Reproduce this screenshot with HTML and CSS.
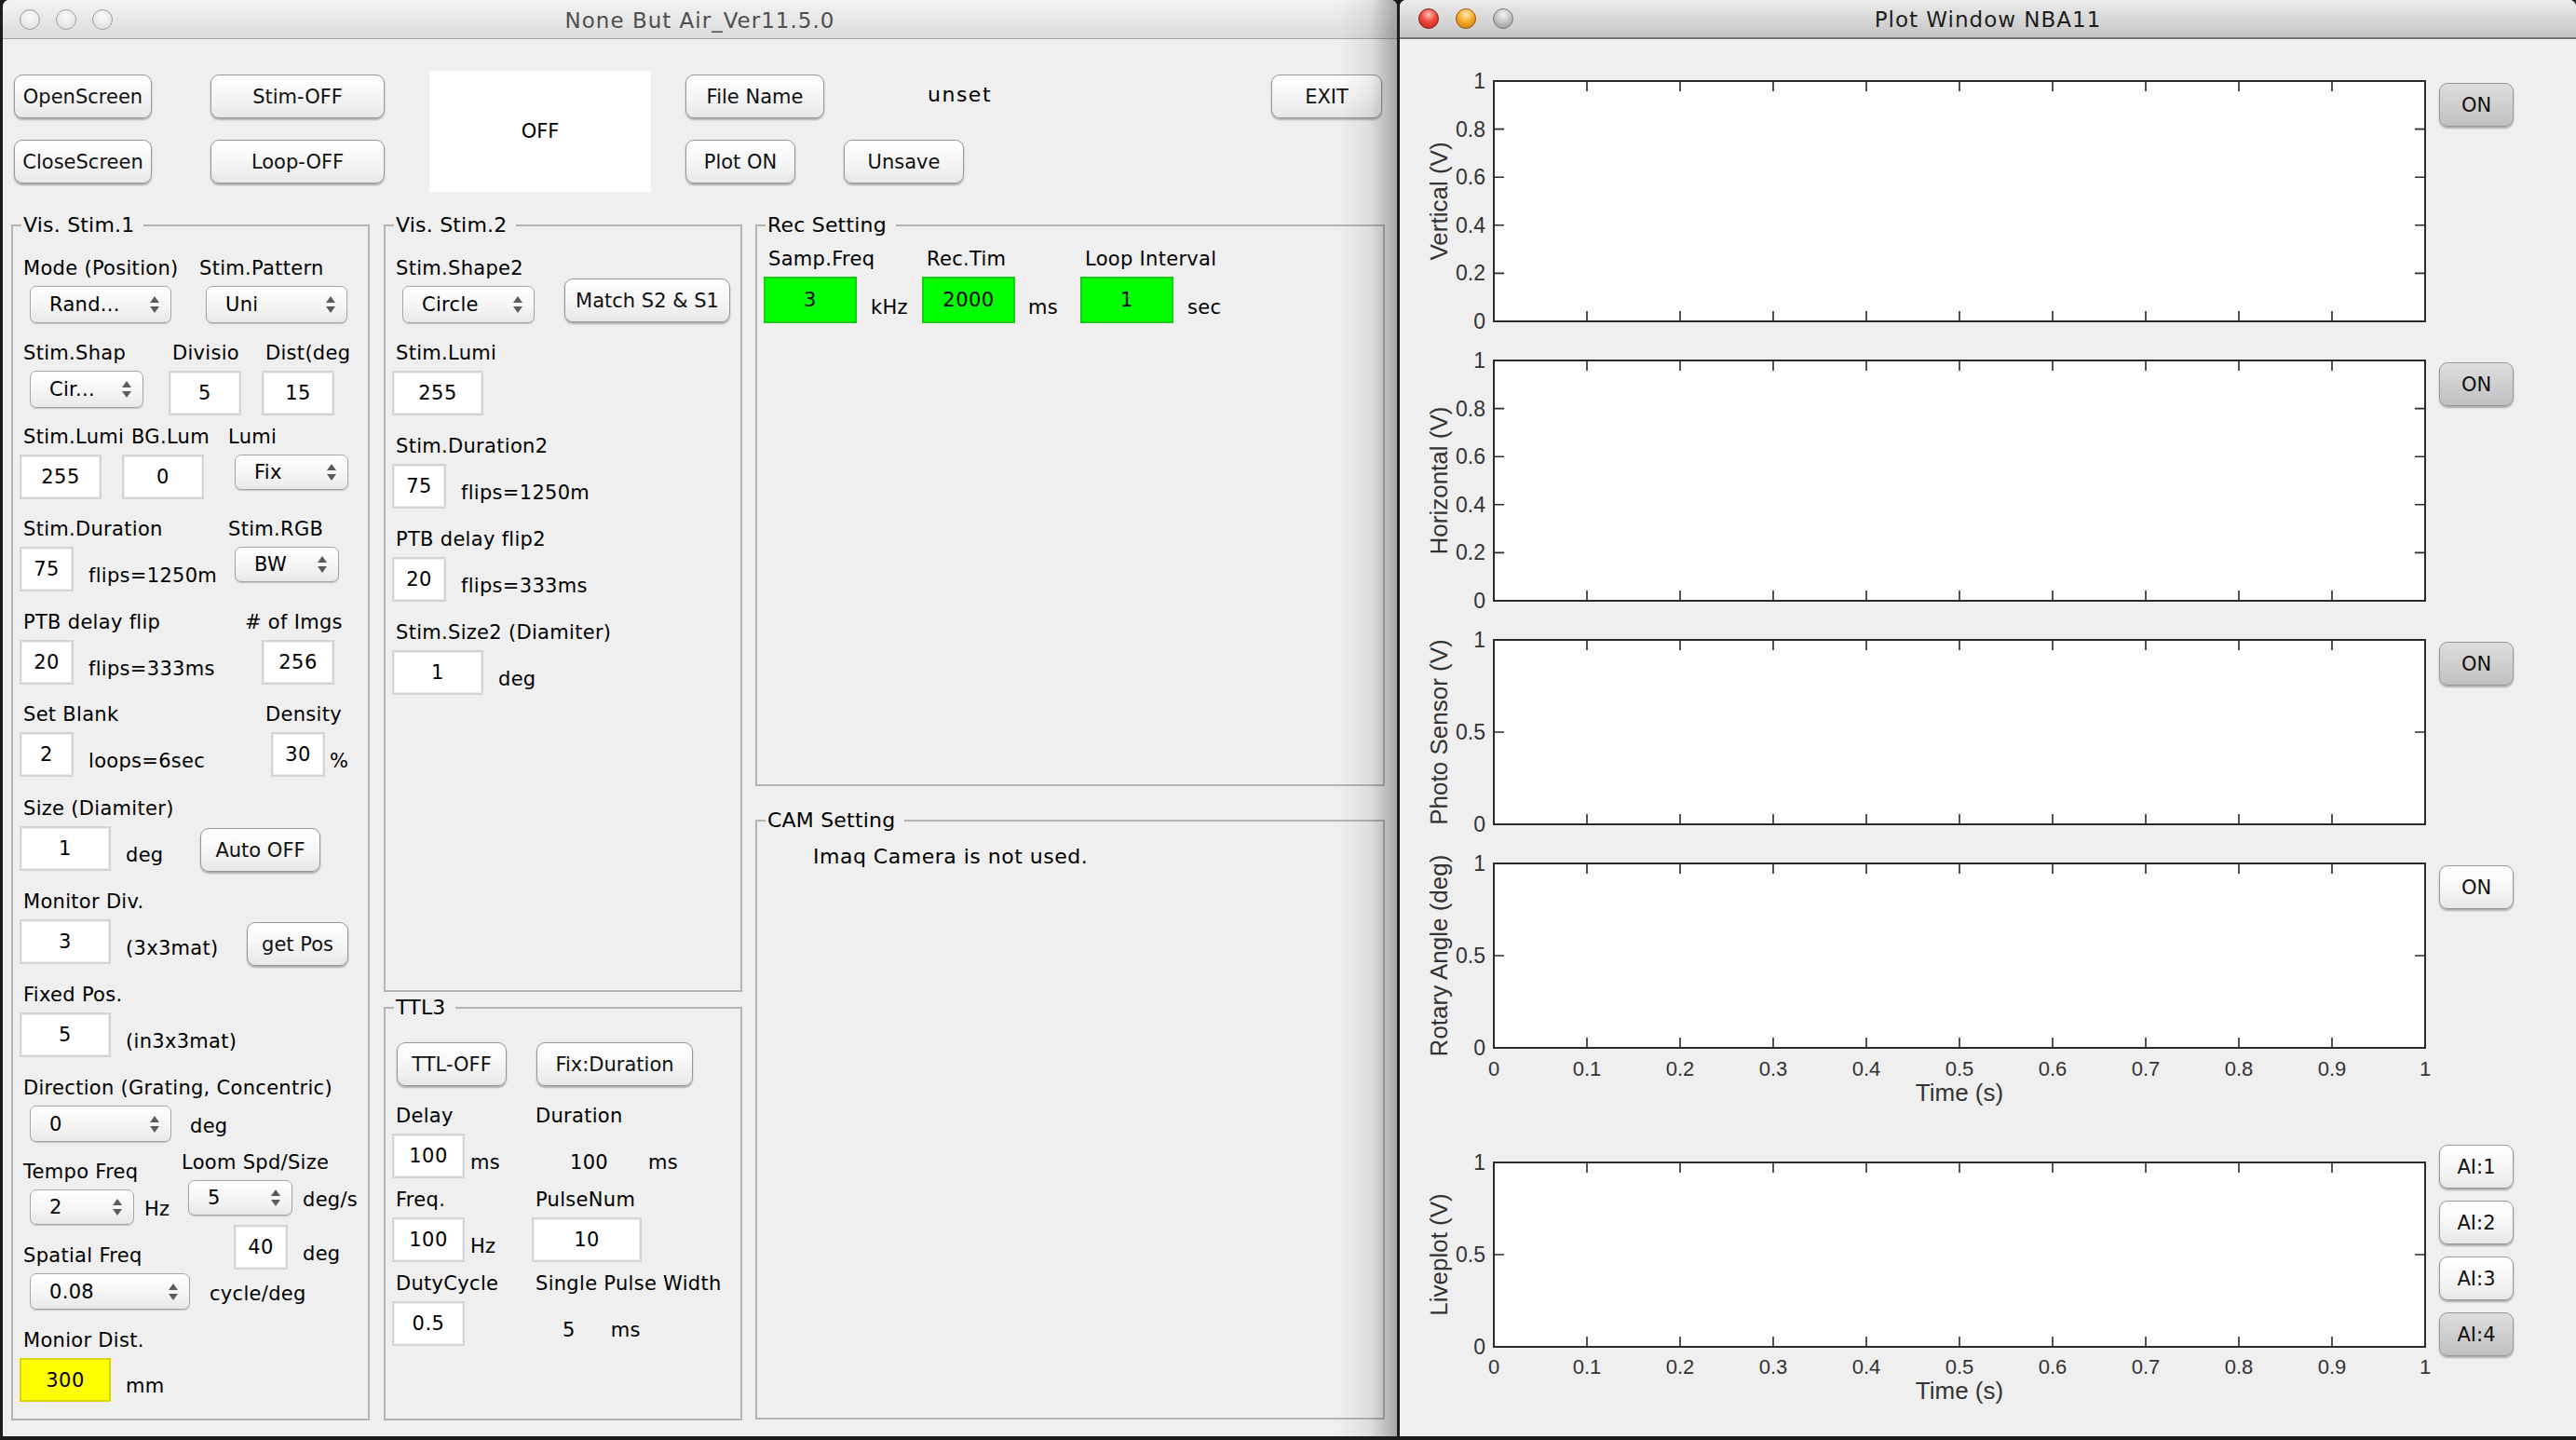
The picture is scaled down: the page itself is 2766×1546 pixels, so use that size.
FILE: index.html
```html
<!DOCTYPE html>
<html lang="en">
<head>
<meta charset="utf-8">
<title>None But Air_Ver11.5.0</title>
<link rel="stylesheet" href="styles.css">
</head>
<body>
<div class="win win-main">
  <div class="titlebar inactive">
    <div class="lights"><span class="light"></span><span class="light"></span><span class="light"></span></div>
    <div class="title">None But Air_Ver11.5.0</div>
    <div></div>
  </div>
  <div class="topbar">
    <div class="stack">
      <div class="btn b-screen">OpenScreen</div>
      <div class="btn b-screen">CloseScreen</div>
    </div>
    <div class="stack stim">
      <div class="btn b-stim">Stim-OFF</div>
      <div class="btn b-stim">Loop-OFF</div>
    </div>
    <div class="status">OFF</div>
    <div class="stack files">
      <div class="file-row"><div class="btn b-file">File Name</div><span class="fname">unset</span></div>
      <div class="file-row"><div class="btn b-plot">Plot ON</div><div class="btn b-unsave">Unsave</div></div>
    </div>
    <div class="btn b-exit">EXIT</div>
  </div>
  <div class="panels">
    <fieldset class="grp vs1">
      <legend>Vis. Stim.1</legend>
      <div class="body b-vs1">
        <div class="row c-mode">
          <div class="fld"><div class="lbl">Mode (Position)</div><div class="line"><div class="popup w152">Rand...</div></div></div>
          <div class="fld"><div class="lbl">Stim.Pattern</div><div class="line"><div class="popup w152">Uni</div></div></div>
        </div>
        <div class="row c-shape">
          <div class="fld"><div class="lbl">Stim.Shap</div><div class="line"><div class="popup w122">Cir...</div></div></div>
          <div class="fld"><div class="lbl">Divisio</div><div class="line"><div class="edit w78">5</div></div></div>
          <div class="fld"><div class="lbl">Dist(deg</div><div class="line"><div class="edit w78">15</div></div></div>
        </div>
        <div class="row c-lumi">
          <div class="fld"><div class="lbl">Stim.Lumi</div><div class="line"><div class="edit w88">255</div></div></div>
          <div class="fld bg"><div class="lbl">BG.Lum</div><div class="line"><div class="edit w88">0</div></div></div>
          <div class="fld"><div class="lbl">Lumi</div><div class="line"><div class="popup s w122">Fix</div></div></div>
        </div>
        <div class="row c-dur">
          <div class="fld"><div class="lbl">Stim.Duration</div><div class="line"><div class="edit w58">75</div><span class="unit">flips=1250m</span></div></div>
          <div class="fld"><div class="lbl">Stim.RGB</div><div class="line"><div class="popup s w112">BW</div></div></div>
        </div>
        <div class="row c-ptb">
          <div class="fld"><div class="lbl">PTB delay flip</div><div class="line"><div class="edit w58">20</div><span class="unit">flips=333ms</span></div></div>
          <div class="fld"><div class="lbl"># of Imgs</div><div class="line"><div class="edit w78 imgs">256</div></div></div>
        </div>
        <div class="row c-blank">
          <div class="fld"><div class="lbl">Set Blank</div><div class="line"><div class="edit w58">2</div><span class="unit">loops=6sec</span></div></div>
          <div class="fld"><div class="lbl">Density</div><div class="line"><div class="edit w58 dens">30</div><span class="unit pct">%</span></div></div>
        </div>
        <div class="row c-size">
          <div class="fld"><div class="lbl">Size (Diamiter)</div><div class="line"><div class="edit w98">1</div><span class="unit">deg</span></div></div>
          <div class="btn w129 auto">Auto OFF</div>
        </div>
        <div class="row c-mdiv">
          <div class="fld"><div class="lbl">Monitor Div.</div><div class="line"><div class="edit w98">3</div><span class="unit">(3x3mat)</span></div></div>
          <div class="btn w109 getpos">get Pos</div>
        </div>
        <div class="row">
          <div class="fld"><div class="lbl">Fixed Pos.</div><div class="line"><div class="edit w98">5</div><span class="unit">(in3x3mat)</span></div></div>
        </div>
        <div class="row">
          <div class="fld"><div class="lbl">Direction (Grating, Concentric)</div><div class="line"><div class="popup m w152">0</div><span class="unit far">deg</span></div></div>
        </div>
        <div class="row c-tempo">
          <div class="fld"><div class="lbl">Tempo Freq</div><div class="line"><div class="popup s w112">2</div><span class="unit near">Hz</span></div></div>
          <div class="fld loom"><div class="lbl">Loom Spd/Size</div>
            <div class="line"><div class="popup s w112">5</div><span class="unit near">deg/s</span></div>
            <div class="line l40"><div class="edit w58">40</div><span class="unit">deg</span></div>
          </div>
        </div>
        <div class="row">
          <div class="fld"><div class="lbl">Spatial Freq</div><div class="line"><div class="popup m w172">0.08</div><span class="unit far2">cycle/deg</span></div></div>
        </div>
        <div class="row">
          <div class="fld"><div class="lbl">Monior Dist.</div><div class="line"><div class="edit w98 yellow">300</div><span class="unit">mm</span></div></div>
        </div>
      </div>
    </fieldset>

    <div class="pcol mid">
      <fieldset class="grp vs2">
        <legend>Vis. Stim.2</legend>
        <div class="body b-vs2">
          <div class="row c-s2">
            <div class="fld"><div class="lbl">Stim.Shape2</div><div class="line"><div class="popup w142">Circle</div></div></div>
            <div class="btn w178 match">Match S2 &amp; S1</div>
          </div>
          <div class="row"><div class="fld"><div class="lbl">Stim.Lumi</div><div class="line"><div class="edit w98">255</div></div></div></div>
          <div class="row"><div class="fld"><div class="lbl">Stim.Duration2</div><div class="line"><div class="edit w58">75</div><span class="unit">flips=1250m</span></div></div></div>
          <div class="row"><div class="fld"><div class="lbl">PTB delay flip2</div><div class="line"><div class="edit w58">20</div><span class="unit">flips=333ms</span></div></div></div>
          <div class="row"><div class="fld"><div class="lbl">Stim.Size2 (Diamiter)</div><div class="line"><div class="edit w98">1</div><span class="unit">deg</span></div></div></div>
        </div>
      </fieldset>
      <fieldset class="grp ttl">
        <legend>TTL3</legend>
        <div class="body b-ttl">
          <div class="row c-ttl"><div class="btn w118 tb">TTL-OFF</div><div class="btn w168 tb">Fix:Duration</div></div>
          <div class="row c-ttl">
            <div class="fld"><div class="lbl">Delay</div><div class="line"><div class="edit w78">100</div><span class="unit n6">ms</span></div></div>
            <div class="fld"><div class="lbl">Duration</div><div class="line"><span class="unit v1">100</span><span class="unit v2">ms</span></div></div>
          </div>
          <div class="row c-ttl">
            <div class="fld"><div class="lbl">Freq.</div><div class="line"><div class="edit w78">100</div><span class="unit n6">Hz</span></div></div>
            <div class="fld"><div class="lbl">PulseNum</div><div class="line"><div class="edit w118">10</div></div></div>
          </div>
          <div class="row c-ttl">
            <div class="fld"><div class="lbl">DutyCycle</div><div class="line"><div class="edit w78">0.5</div></div></div>
            <div class="fld"><div class="lbl">Single Pulse Width</div><div class="line"><span class="unit v3">5</span><span class="unit v4">ms</span></div></div>
          </div>
        </div>
      </fieldset>
    </div>

    <div class="pcol">
      <fieldset class="grp rec">
        <legend>Rec Setting</legend>
        <div class="body b-rec">
          <div class="row c-rec">
            <div class="fld"><div class="lbl">Samp.Freq</div><div class="line"><div class="edit green">3</div><span class="unit g15">kHz</span></div></div>
            <div class="fld"><div class="lbl">Rec.Tim</div><div class="line"><div class="edit green">2000</div><span class="unit g14">ms</span></div></div>
            <div class="fld"><div class="lbl">Loop Interval</div><div class="line"><div class="edit green">1</div><span class="unit g15">sec</span></div></div>
          </div>
        </div>
      </fieldset>
      <fieldset class="grp cam">
        <legend>CAM Setting</legend>
        <div class="body b-cam"><div class="cam-msg">Imaq Camera is not used.</div></div>
      </fieldset>
    </div>
  </div>
</div>

<div class="win win-plot">
  <div class="titlebar active">
    <div class="lights"><span class="light red"></span><span class="light amber"></span><span class="light grey"></span></div>
    <div class="title">Plot Window NBA11</div>
    <div></div>
  </div>
  <div class="plot-body">
    <svg class="plots" width="1103" height="1500" viewBox="1503 42 1103 1500" xmlns="http://www.w3.org/2000/svg">
      <g id="axA">
        <rect class="box" x="1604" y="87" width="1000" height="258"/>
        <path class="tk" d="M1704 87v11M1804 87v11M1904 87v11M2004 87v11M2104 87v11M2204 87v11M2304 87v11M2404 87v11M2504 87v11M1704 345v-11M1804 345v-11M1904 345v-11M2004 345v-11M2104 345v-11M2204 345v-11M2304 345v-11M2404 345v-11M2504 345v-11M1604 138.6h11M1604 190.2h11M1604 241.8h11M1604 293.4h11M2604 138.6h-11M2604 190.2h-11M2604 241.8h-11M2604 293.4h-11"/>
        <g class="yt">
          <text x="1595" y="87">1</text>
          <text x="1595" y="138.6">0.8</text>
          <text x="1595" y="190.2">0.6</text>
          <text x="1595" y="241.8">0.4</text>
          <text x="1595" y="293.4">0.2</text>
          <text x="1595" y="345">0</text>
        </g>
      </g>
      <use href="#axA" y="300"/>
      <g id="axB">
        <rect class="box" x="1604" y="687" width="1000" height="198"/>
        <path class="tk" d="M1704 687v11M1804 687v11M1904 687v11M2004 687v11M2104 687v11M2204 687v11M2304 687v11M2404 687v11M2504 687v11M1704 885v-11M1804 885v-11M1904 885v-11M2004 885v-11M2104 885v-11M2204 885v-11M2304 885v-11M2404 885v-11M2504 885v-11M1604 786h11M2604 786h-11"/>
        <g class="yt">
          <text x="1595" y="687">1</text>
          <text x="1595" y="786">0.5</text>
          <text x="1595" y="885">0</text>
        </g>
      </g>
      <use href="#axB" y="240"/>
      <use href="#axB" y="561"/>
      <g id="xl" class="xt">
        <text x="1604" y="1147">0</text>
        <text x="1704" y="1147">0.1</text>
        <text x="1804" y="1147">0.2</text>
        <text x="1904" y="1147">0.3</text>
        <text x="2004" y="1147">0.4</text>
        <text x="2104" y="1147">0.5</text>
        <text x="2204" y="1147">0.6</text>
        <text x="2304" y="1147">0.7</text>
        <text x="2404" y="1147">0.8</text>
        <text x="2504" y="1147">0.9</text>
        <text x="2604" y="1147">1</text>
        <text class="lab" x="2104" y="1173">Time (s)</text>
      </g>
      <use href="#xl" y="320"/>
      <text class="lab" transform="translate(1545 216) rotate(-90)">Vertical (V)</text>
      <text class="lab" transform="translate(1545 516) rotate(-90)">Horizontal (V)</text>
      <text class="lab" transform="translate(1545 786) rotate(-90)">Photo Sensor (V)</text>
      <text class="lab" transform="translate(1545 1026) rotate(-90)">Rotary Angle (deg)</text>
      <text class="lab" transform="translate(1545 1347) rotate(-90)">Liveplot (V)</text>
    </svg>
    <div class="plot-btns">
      <div class="btn pb down">ON</div>
      <div class="btn pb down gap-plot">ON</div>
      <div class="btn pb down gap-plot">ON</div>
      <div class="btn pb gap-short">ON</div>
      <div class="btn pb gap-plot">AI:1</div>
      <div class="btn pb gap-ai">AI:2</div>
      <div class="btn pb gap-ai">AI:3</div>
      <div class="btn pb down gap-ai">AI:4</div>
    </div>
  </div>
</div>
</body>
</html>
```

FILE: styles.css
```css
* { box-sizing: border-box; }
html, body { margin: 0; padding: 0; }
body {
  width: 2766px;
  height: 1546px;
  overflow: hidden;
  background: #1c1c1c;
  display: flex;
  align-items: flex-start;
  font-family: "DejaVu Sans", "Liberation Sans", sans-serif;
  color: #000;
}

/* windows */
.win {
  height: 1542px;
  margin-left: 3px;
  background: #efefef;
  border-radius: 7px 7px 0 0;
  position: relative;
  overflow: hidden;
  display: flex;
  flex-direction: column;
}
.win-main { width: 1497px; }
.win-main::after {
  content: "";
  position: absolute;
  top: 0; right: 0; bottom: 0;
  width: 64px;
  background: linear-gradient(90deg, rgba(0,0,0,0), rgba(0,0,0,.07) 55%, rgba(0,0,0,.30));
  pointer-events: none;
}
.win-plot { width: 1263px; }

.titlebar {
  flex: 0 0 42px;
  display: grid;
  grid-template-columns: 1fr auto 1fr;
  align-items: center;
}
.titlebar.inactive { background: linear-gradient(#f3f3f3, #dcdcdc); border-bottom: 1px solid #a6a6a6; }
.titlebar.active { background: linear-gradient(#ececec, #c4c4c4); border-bottom: 2px solid #727272; }
.lights { display: flex; gap: 17px; }
.inactive .lights { padding-left: 18px; }
.active .lights { padding-left: 20px; gap: 18px; }
.light {
  width: 22px; height: 22px; border-radius: 50%;
  background: radial-gradient(circle at 50% 35%, #fbfbfb, #dadada);
  border: 1px solid #a0a0a0;
}
.light.red { background: radial-gradient(circle at 50% 28%, #ffc2b8 0%, #f0483b 45%, #b11f17 100%); border-color: #861a12; }
.light.amber { background: radial-gradient(circle at 50% 28%, #ffe9b0 0%, #f4a928 48%, #c0740f 100%); border-color: #94590b; }
.light.grey { background: radial-gradient(circle at 50% 28%, #f4f4f4 0%, #c2c2c2 50%, #8d8d8d 100%); border-color: #7b7b7b; }
.title { font-size: 23px; letter-spacing: 1px; white-space: nowrap; padding-top: 2px; }
.inactive .title { color: #4f4f4f; }
.active .title { color: #1e1e1e; }

/* buttons / controls */
.btn {
  height: 47px;
  display: flex; align-items: center; justify-content: center;
  border: 1px solid #979797;
  border-radius: 9px;
  background: linear-gradient(#ffffff, #f7f7f7 45%, #e8e8e8);
  box-shadow: 0 2px 2px rgba(0,0,0,.28);
  font-size: 21px;
  color: #111;
  white-space: nowrap;
}
.btn.down { background: linear-gradient(#dedede, #cfcfcf 50%, #c1c1c1); }

.lbl { height: 26px; line-height: 26px; font-size: 21px; white-space: nowrap; letter-spacing: .3px; }
.fld { display: flex; flex-direction: column; align-items: flex-start; }
.fld.bg .lbl { margin-left: 6px; }
.line { display: flex; align-items: flex-end; margin-top: 6px; }
.unit { line-height: 26px; margin: 0 0 4px 16px; font-size: 21px; white-space: nowrap; letter-spacing: .3px; }
.unit.near { margin-left: 11px; }
.unit.far { margin-left: 20px; }
.unit.far2 { margin-left: 21px; }
.unit.pct { margin-left: 5px; }
.unit.n6 { margin-left: 6px; }
.unit.v1 { margin-left: 37px; }
.unit.v2 { margin-left: 43px; }
.unit.v3 { margin-left: 29px; }
.unit.v4 { margin-left: 38px; }
.unit.g15 { margin-left: 15px; }
.unit.g14 { margin-left: 14px; }

.edit {
  height: 48px;
  margin-left: -4px;
  background: #fff;
  border: 2px solid #d4d4d4;
  box-shadow: inset 0 0 0 1px #ececec;
  display: flex; align-items: center; justify-content: center;
  font-size: 21px;
  letter-spacing: .5px;
}
.edit.imgs { margin-left: 18px; }
.edit.dens { margin-left: 6px; }
.edit.yellow { height: 47px; background: #ffff00; border-color: #d8d800; box-shadow: none; }
.edit.green { width: 100px; height: 50px; margin-left: -5px; background: #00ff00; border-color: #12cf12; box-shadow: none; }

.popup {
  height: 40px;
  margin-left: 7px;
  position: relative;
  display: flex; align-items: center;
  padding-left: 20px;
  font-size: 21px;
  letter-spacing: .3px;
  border: 1px solid #a6a6a6;
  border-radius: 7px;
  background: linear-gradient(#ffffff, #f5f5f5 55%, #e8e8e8);
  box-shadow: 0 1px 1px rgba(0,0,0,.18);
}
.popup.s { height: 38px; }
.popup.m { height: 39px; }
.popup::before, .popup::after {
  content: "";
  position: absolute;
  right: 12px;
  border-left: 5px solid transparent;
  border-right: 5px solid transparent;
}
.popup::before { top: calc(50% - 9px); border-bottom: 7px solid #5c5c5c; }
.popup::after { top: calc(50% + 2px); border-top: 7px solid #5c5c5c; }

.w58 { width: 58px; } .w78 { width: 78px; } .w88 { width: 88px; } .w98 { width: 98px; }
.w109 { width: 109px; } .w112 { width: 112px; } .w118 { width: 118px; } .w122 { width: 122px; }
.w129 { width: 129px; } .w142 { width: 142px; } .w152 { width: 152px; } .w168 { width: 168px; }
.w172 { width: 172px; } .w178 { width: 178px; }

/* top bar */
.topbar {
  flex: 0 0 187px;
  display: flex;
  align-items: flex-start;
  padding: 38px 16px 0 12px;
}
.stack { display: flex; flex-direction: column; gap: 23px; }
.b-screen { width: 148px; }
.stim { margin-left: 63px; }
.b-stim { width: 187px; }
.status {
  margin-left: 48px; margin-top: -4px;
  width: 238px; height: 130px;
  background: #fff;
  display: flex; align-items: center; justify-content: center;
  font-size: 21px;
}
.files { margin-left: 37px; }
.file-row { display: flex; align-items: center; }
.b-file { width: 149px; }
.fname { margin-left: 111px; margin-top: -4px; font-size: 22px; letter-spacing: 1.5px; }
.b-plot { width: 118px; }
.b-unsave { width: 129px; margin-left: 52px; }
.b-exit { width: 119px; margin-left: auto; }

/* panels */
.panels { flex: 1; display: flex; align-items: flex-start; padding-left: 9px; }
.pcol { display: flex; flex-direction: column; }
.grp { margin: 0; padding: 0; min-width: 0; border: 2px solid #b4b4b4; }
.grp > legend { margin-left: 9px; padding: 0 10px 0 2px; font-size: 22px; line-height: 26px; letter-spacing: .2px; }
.vs1 { width: 385px; height: 1296px; margin-right: 15px; }
.mid { margin-right: 14px; }
.vs2 { width: 385px; height: 836px; }
.ttl { width: 385px; height: 456px; margin-top: 4px; }
.rec { width: 676px; height: 615px; }
.cam { width: 676px; height: 656px; margin-top: 24px; }

.body { display: grid; }
.row { display: grid; align-items: start; }
.b-vs1 { padding: 20px 0 0 11px; grid-template-rows: 91px 90px 99px 100px 99px 101px 100px 100px 100px 90px 90px 91px auto; }
.c-mode { grid-template-columns: 189px 1fr; }
.c-shape { grid-template-columns: 160px 100px 1fr; }
.c-lumi { grid-template-columns: 110px 110px 1fr; }
.c-dur { grid-template-columns: 220px 1fr; }
.c-ptb { grid-template-columns: 238px 1fr; }
.c-blank { grid-template-columns: 260px 1fr; }
.c-size { grid-template-columns: 190px 1fr; }
.c-mdiv { grid-template-columns: 240px 1fr; }
.c-tempo { grid-template-columns: 170px 1fr; }
.auto { margin-top: 34px; }
.getpos { margin-top: 35px; }
.loom { margin-top: -10px; }
.line.l40 { margin-top: 10px; margin-left: 60px; }

.b-vs2 { padding: 20px 0 0 11px; grid-template-rows: 91px 100px 100px 100px auto; }
.c-s2 { grid-template-columns: 181px 1fr; }
.match { margin-top: 24px; }

.b-ttl { padding: 24px 0 0 11px; grid-template-rows: 66px 90px 90px auto; }
.c-ttl { grid-template-columns: 150px 1fr; }
.b-ttl .line { min-height: 48px; }
.tb { margin-left: 1px; }

.b-rec { padding: 10px 0 0 12px; }
.c-rec { grid-template-columns: 170px 170px 1fr; }

.b-cam { padding: 13px 0 0 60px; }
.cam-msg { font-size: 22px; line-height: 26px; letter-spacing: .5px; }

/* plot window */
.plot-body { flex: 1; display: flex; align-items: flex-start; }
.plots { display: block; flex: 0 0 1103px; overflow: visible; }
.plots .box { fill: #fff; stroke: #2b2b2b; stroke-width: 2; }
.plots .tk { fill: none; stroke: #2b2b2b; stroke-width: 1.6; }
.plots text { font-family: "Liberation Sans", "DejaVu Sans", sans-serif; fill: #333; }
.plots .yt text { font-size: 23px; text-anchor: end; dominant-baseline: central; }
.plots .xt text { font-size: 22px; text-anchor: middle; dominant-baseline: central; }
.plots text.lab { font-size: 26px; text-anchor: middle; dominant-baseline: central; }
.plot-btns { display: flex; flex-direction: column; margin-left: 13px; padding-top: 47px; }
.pb { width: 80px; }
.gap-plot { margin-top: 253px; }
.gap-short { margin-top: 193px; }
.gap-ai { margin-top: 13px; }
```
